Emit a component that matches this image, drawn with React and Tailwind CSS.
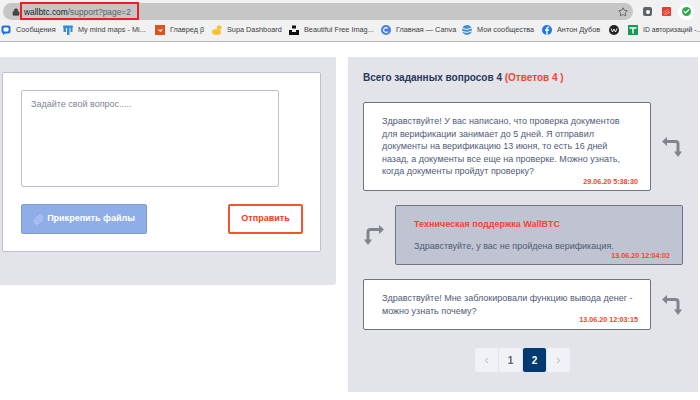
import React from "react";
import { ChevronLeft, ChevronRight, Lock, Paperclip, Star, Check } from "lucide-react";

const sans = "font-['Liberation_Sans',Arial,sans-serif]";

const Fav = ({ children }) => (
  <svg width="10" height="10" viewBox="0 0 10 10" className="shrink-0">{children}</svg>
);

const bookmarks = [
  {
    label: "Сообщения",
    width: "w-[62px]",
    text: "text-[7.3px]",
    icon: (
      <Fav>
        <rect x="0.5" y="0.5" width="9" height="8" rx="2" fill="#1a73e8" />
        <rect x="2.5" y="2.5" width="5" height="4" rx="1" fill="white" />
        <path d="M2 8H5L2 10Z" fill="#1a73e8" />
      </Fav>
    ),
  },
  {
    label: "My mind maps - Mi...",
    width: "w-[92px]",
    text: "text-[7.3px]",
    icon: (
      <Fav>
        <rect x="0" y="0.5" width="10" height="2.5" rx="1" fill="#2f8fd8" />
        <rect x="0.5" y="3" width="2.5" height="4" fill="#2f8fd8" />
        <rect x="4" y="3" width="2.5" height="7" fill="#2f8fd8" />
        <rect x="7.5" y="3" width="2" height="4" fill="#2f8fd8" />
      </Fav>
    ),
  },
  {
    label: "Главред β",
    width: "w-[57px]",
    text: "text-[7.3px]",
    icon: (
      <Fav>
        <rect width="10" height="10" fill="#d9541e" />
        <path d="M2.5 4L5 5L8 3.5L6 7L4 6Z" fill="#f5e3d8" />
      </Fav>
    ),
  },
  {
    label: "Supa Dashboard",
    width: "w-[77px]",
    text: "text-[7.3px]",
    icon: (
      <Fav>
        <ellipse cx="4.5" cy="7" rx="4.5" ry="3" fill="#f5c32c" />
        <circle cx="7" cy="2.5" r="2.2" fill="#f5c32c" />
        <path d="M9 2L10 3L8.5 3.5Z" fill="#e8892a" />
      </Fav>
    ),
  },
  {
    label: "Beautiful Free Imag...",
    width: "w-[92px]",
    text: "text-[7.3px]",
    icon: (
      <Fav>
        <rect x="3" y="0.5" width="4" height="3" fill="#111" />
        <path d="M0 5H3V7H7V5H10V10H0Z" fill="#111" />
      </Fav>
    ),
  },
  {
    label: "Главная — Canva",
    width: "w-[81px]",
    text: "text-[7.3px]",
    icon: (
      <Fav>
        <circle cx="5" cy="5" r="5" fill="#4a7fe0" />
        <path d="M6.8 3.4A2.4 2.4 0 1 0 6.8 6.6" fill="none" stroke="white" strokeWidth="1.1" />
      </Fav>
    ),
  },
  {
    label: "Мои сообщества",
    width: "w-[80px]",
    text: "text-[7.3px]",
    icon: (
      <Fav>
        <circle cx="5" cy="5" r="5" fill="#3f8fd0" />
        <path d="M0 3.5Q5 5.5 10 3M0 6.5Q5 8.5 10 6" fill="none" stroke="white" strokeWidth="0.9" />
      </Fav>
    ),
  },
  {
    label: "Антон Дубов",
    width: "w-[67px]",
    text: "text-[7.3px]",
    icon: (
      <Fav>
        <circle cx="5" cy="5" r="5" fill="#1877f2" />
        <path d="M5.6 10V5.8H7L7.2 4.3H5.6V3.4Q5.6 2.8 6.3 2.8H7.2V1.5H6Q4.2 1.5 4.2 3.3V4.3H3V5.8H4.2V10Z" fill="white" />
      </Fav>
    ),
  },
  {
    label: "",
    width: "w-[19px]",
    text: "text-[7.3px]",
    icon: (
      <Fav>
        <circle cx="5" cy="5" r="5" fill="#222" />
        <path d="M2 3.5L3.5 7L5 4L6.5 7L8 3.5" fill="none" stroke="white" strokeWidth="0.9" />
      </Fav>
    ),
  },
  {
    label: "ID авторизаций -...",
    width: "w-[70px]",
    text: "text-[6.9px]",
    icon: (
      <Fav>
        <rect width="10" height="10" fill="#0f9d58" />
        <path d="M1.5 3H8.5M5 3V8.5" stroke="white" strokeWidth="1.4" />
      </Fav>
    ),
  },
];

// Curved arrow between the question and answer cards
const TurnArrow = ({ flip }) => (
  <svg width="22" height="22" viewBox="0 0 22 22" className={flip ? "-scale-x-100" : ""}>
    <path d="M5 5.5H14.5Q17 5.5 17 8V16" fill="none" stroke="#7f858d" strokeWidth="3" />
    <path d="M6 1V10L1 5.5Z" fill="#7f858d" />
    <path d="M13 15.5H21L17 21Z" fill="#7f858d" />
  </svg>
);

const Bubble = ({ lines, date, h, dateMt }) => (
  <div className={`w-[288px] ${h} rounded-[2px] border border-[#6f7480] bg-white pl-[18px] pr-[12px] pt-[12px]`}>
    {lines.map((line) => (
      <p key={line} className="whitespace-nowrap text-[9px] leading-[12.6px] text-[#4f5b78]">{line}</p>
    ))}
    <p className={`${dateMt} text-right text-[7.2px] font-bold leading-[10px] text-[#f4442e]`}>{date}</p>
  </div>
);

export default function App() {
  return (
    <div className={`${sans} flex h-[400px] w-[700px] flex-col overflow-hidden bg-white`}>
      {/* Browser toolbar */}
      <div className="h-[42px] shrink-0 border-b border-[#b8b8b8] bg-[#f1f1f1]">
        <div className="flex h-[20px] items-center pt-[3px]">
          <div className="ml-[3px] flex h-[17px] w-[630px] items-center rounded-full bg-[#c6c6c6] pl-[9px] pr-[5px]">
            <Lock size={8} fill="#444" stroke="#444" />
            <span className="relative ml-[4px] text-[8.4px] leading-[12px] text-[#5f5f5f]">
              <span className="text-[#202124]">wallbtc.com</span>/support?page=2
              <span className="absolute -left-[4px] -top-[4px] h-[18px] w-[119px] border-2 border-[#ee1c25]" />
            </span>
            <Star size={10} className="ml-auto" stroke="#555" />
          </div>
          <span className="ml-[10px] flex h-[9px] w-[9px] items-center justify-center rounded-[2px] bg-[#5f6368]">
            <span className="h-[4px] w-[4px] rounded-full bg-white" />
          </span>
          <svg width="9" height="9" viewBox="0 0 9 9" className="ml-[10px]">
            <rect width="9" height="9" rx="1" fill="#e53a2f" />
            <path d="M1 6L6 2M2 7.5L7.5 3.5M3.5 8L8 5" stroke="#f6b3ad" strokeWidth="0.7" />
          </svg>
          <span className="ml-[7px] flex h-[16px] w-[16px] items-center justify-center rounded-full bg-white">
            <span className="flex h-[9px] w-[9px] items-center justify-center rounded-full bg-[#34a853]">
              <Check size={7} stroke="white" strokeWidth={4} />
            </span>
          </span>
        </div>
        <div className="flex h-[20px] items-center pl-[1px]">
          {bookmarks.map((b) => (
            <div key={b.label || "w"} className={`flex ${b.width} shrink-0 items-center gap-[5px]`}>
              {b.icon}
              <span className={`whitespace-nowrap ${b.text} text-[#3c4043]`}>{b.label}</span>
            </div>
          ))}
        </div>
      </div>

      {/* Page */}
      <div className="flex items-start pt-[15px]">
        <div className="h-[228px] w-[336px] shrink-0 rounded-br-[2px] bg-[#e3e4e9] pl-[2px] pt-[15px]">
          <div className="h-[180px] w-[319px] rounded-[2px] border border-[#bcc0cf] bg-white pl-[18px] pt-[17px]">
            <div className="h-[97px] w-[258px] rounded-[2px] border border-[#bcc0cf] px-[9px] py-[6px] text-[9px] leading-[15px] text-[#7d8494]">
              Задайте свой вопрос.....
            </div>
            <div className="mt-[17px] flex w-[282px] items-center justify-between">
              <div className="flex h-[30px] w-[126px] items-center justify-center gap-[3px] rounded-[2px] border border-[#7f9bd0] bg-[#8fade8] text-[9px] font-bold text-white">
                <Paperclip size={11} stroke="#c6d5f2" />
                Прикрепить файлы
              </div>
              <div className="flex h-[30px] w-[75px] items-center justify-center rounded-[2px] border-2 border-[#f5532d] bg-white text-[9px] font-bold text-[#f03a1c]">
                Отправить
              </div>
            </div>
          </div>
        </div>

        <div className="ml-[12px] flex h-[335px] w-[350px] flex-col bg-[#e3e4e9] pl-[15px]">
          <p className="mt-[15px] text-[10px] font-bold leading-[12px] text-[#27375f]">
            Всего заданных вопросов 4 <span className="text-[#f4442e]">(Ответов 4 )</span>
          </p>
          <div className="mt-[18px] flex items-center">
            <Bubble
              h="h-[89px]"
              dateMt="-mt-[1px]"
              date="29.06.20 5:38:30"
              lines={[
                "Здравствуйте! У вас написано, что проверка документов",
                "для верификации занимает до 5 дней. Я отправил",
                "документы на верификацию 13 июня, то есть 16 дней",
                "назад, а документы все еще на проверке. Можно узнать,",
                "когда документы пройдут проверку?",
              ]}
            />
            <div className="ml-[10px]"><TurnArrow /></div>
          </div>
          <div className="mt-[14px] flex items-center">
            <div className="mr-[10px]"><TurnArrow flip /></div>
            <div className="h-[60px] w-[288px] rounded-[2px] border border-[#6f7480] bg-[#c0c3d2] pl-[18px] pr-[12px] pt-[12px]">
              <p className="text-[9px] font-bold leading-[12px] text-[#f4442e]">Техническая поддержка WallBTC</p>
              <p className="mt-[10px] text-[9px] leading-[12px] text-[#4f5b78]">Здравствуйте, у вас не пройдена верификация.</p>
              <p className="-mt-[1px] text-right text-[7.2px] font-bold leading-[9px] text-[#f4442e]">13.06.20 12:04:02</p>
            </div>
          </div>
          <div className="mt-[14px] flex items-center">
            <Bubble
              h="h-[51px]"
              dateMt="-mt-[2px]"
              date="13.06.20 12:03:15"
              lines={["Здравствуйте! Мне заблокировали функцию вывода денег -", "можно узнать почему?"]}
            />
            <div className="ml-[10px]"><TurnArrow /></div>
          </div>
          <div className="ml-[112px] mt-[18px] flex h-[24px] items-stretch gap-[1px] text-[10px] font-bold">
            <div className="flex w-[23px] items-center justify-center rounded-[2px] bg-[#f1f2f6] text-[#9a9ea8]"><ChevronLeft size={9} /></div>
            <div className="flex w-[23px] items-center justify-center rounded-[2px] bg-[#f1f2f6] text-[#5d6470]">1</div>
            <div className="flex w-[23px] items-center justify-center rounded-[2px] bg-[#003a70] text-white">2</div>
            <div className="flex w-[23px] items-center justify-center rounded-[2px] bg-[#f1f2f6] text-[#9a9ea8]"><ChevronRight size={9} /></div>
          </div>
        </div>
      </div>
    </div>
  );
}
